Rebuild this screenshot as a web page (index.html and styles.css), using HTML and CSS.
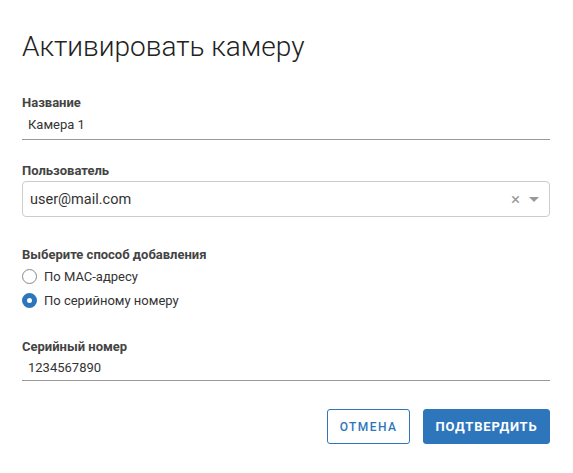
FILE: index.html
```html
<!DOCTYPE html>
<html lang="ru">
<head>
<meta charset="utf-8">
<title>Активировать камеру</title>
<link rel="stylesheet" href="styles.css">
</head>
<body>
<div class="dialog">
  <h1 class="dialog-title">Активировать камеру</h1>

  <div class="field field-name">
    <label class="field-label">Название</label>
    <div class="line-input">Камера 1</div>
  </div>

  <div class="field field-user">
    <label class="field-label">Пользователь</label>
    <div class="select">
      <span class="select-value">user@mail.com</span>
      <span class="select-clear">×</span>
      <span class="select-arrow"></span>
    </div>
  </div>

  <div class="field field-radios">
    <label class="field-label">Выберите способ добавления</label>
    <div class="radio"><span class="radio-dot"></span><span>По МАС-адресу</span></div>
    <div class="radio checked"><span class="radio-dot"></span><span>По серийному номеру</span></div>
  </div>

  <div class="field field-serial">
    <label class="field-label">Серийный номер</label>
    <div class="line-input">1234567890</div>
  </div>

  <div class="actions">
    <button class="btn btn-outline">Отмена</button>
    <button class="btn btn-primary">Подтвердить</button>
  </div>
</div>
</body>
</html>
```

FILE: styles.css
```css
html, body {
  margin: 0;
  background: #fff;
}

body {
  font-family: Roboto, "Liberation Sans", sans-serif;
  color: #333;
}

.dialog {
  width: 528px;
  padding: 30px 23px 0 22px;
}

.dialog-title {
  margin: 0 0 31px;
  font-size: 28px;
  font-weight: 300;
  line-height: 34px;
  color: #222;
}

.field {
  display: flex;
  flex-direction: column;
}

.field-label {
  font-size: 13px;
  font-weight: 700;
  line-height: 16px;
  color: #444;
  margin-bottom: 4px;
}

.field-name {
  margin-bottom: 23px;
}

.field-name .field-label {
  margin-bottom: 5px;
}

.field-user {
  margin-bottom: 30px;
}

.field-user .field-label {
  margin-bottom: 2px;
}

.field-radios {
  margin-bottom: 27px;
}

.field-radios .field-label {
  margin-bottom: 1px;
}

.field-serial {
  margin-bottom: 28px;
}

.line-input {
  font-size: 13px;
  line-height: 18px;
  padding: 0 6px 3px;
  border-bottom: 1px solid #999;
  color: #333;
}

.field-name .line-input {
  padding-bottom: 5px;
}

.select {
  display: flex;
  align-items: center;
  height: 34px;
  border: 1px solid #ccc;
  border-radius: 4px;
  padding: 0 10px 0 7px;
}

.select-value {
  flex: 1;
  font-size: 14.5px;
  color: #333;
}

.select-clear {
  font-size: 17px;
  color: #999;
  margin-right: 9px;
  line-height: 1;
}

.select-arrow {
  width: 0;
  height: 0;
  border-left: 5px solid transparent;
  border-right: 5px solid transparent;
  border-top: 5px solid #999;
}

.radio {
  display: flex;
  align-items: center;
  gap: 7px;
  font-size: 13px;
  color: #333;
  height: 24px;
}

.radio-dot {
  box-sizing: border-box;
  width: 15px;
  height: 15px;
  border: 1px solid #888;
  border-radius: 50%;
}

.radio.checked .radio-dot {
  border: 5px solid #2d76bb;
  background: #fff;
}

.actions {
  display: flex;
  justify-content: flex-end;
  gap: 13px;
}

.btn {
  height: 35px;
  border-radius: 3px;
  font-family: Roboto, "Liberation Sans", sans-serif;
  font-size: 12px;
  font-weight: 500;
  letter-spacing: 1.4px;
  text-transform: uppercase;
  cursor: pointer;
}

.btn-outline {
  width: 83px;
  background: #fff;
  color: #2d76bb;
  border: 1px solid #2d76bb;
}

.btn-primary {
  width: 127px;
  background: #2d76bb;
  color: #fff;
  border: 1px solid #2d76bb;
  font-weight: 700;
  font-size: 13px;
  letter-spacing: 0.8px;
}
```
